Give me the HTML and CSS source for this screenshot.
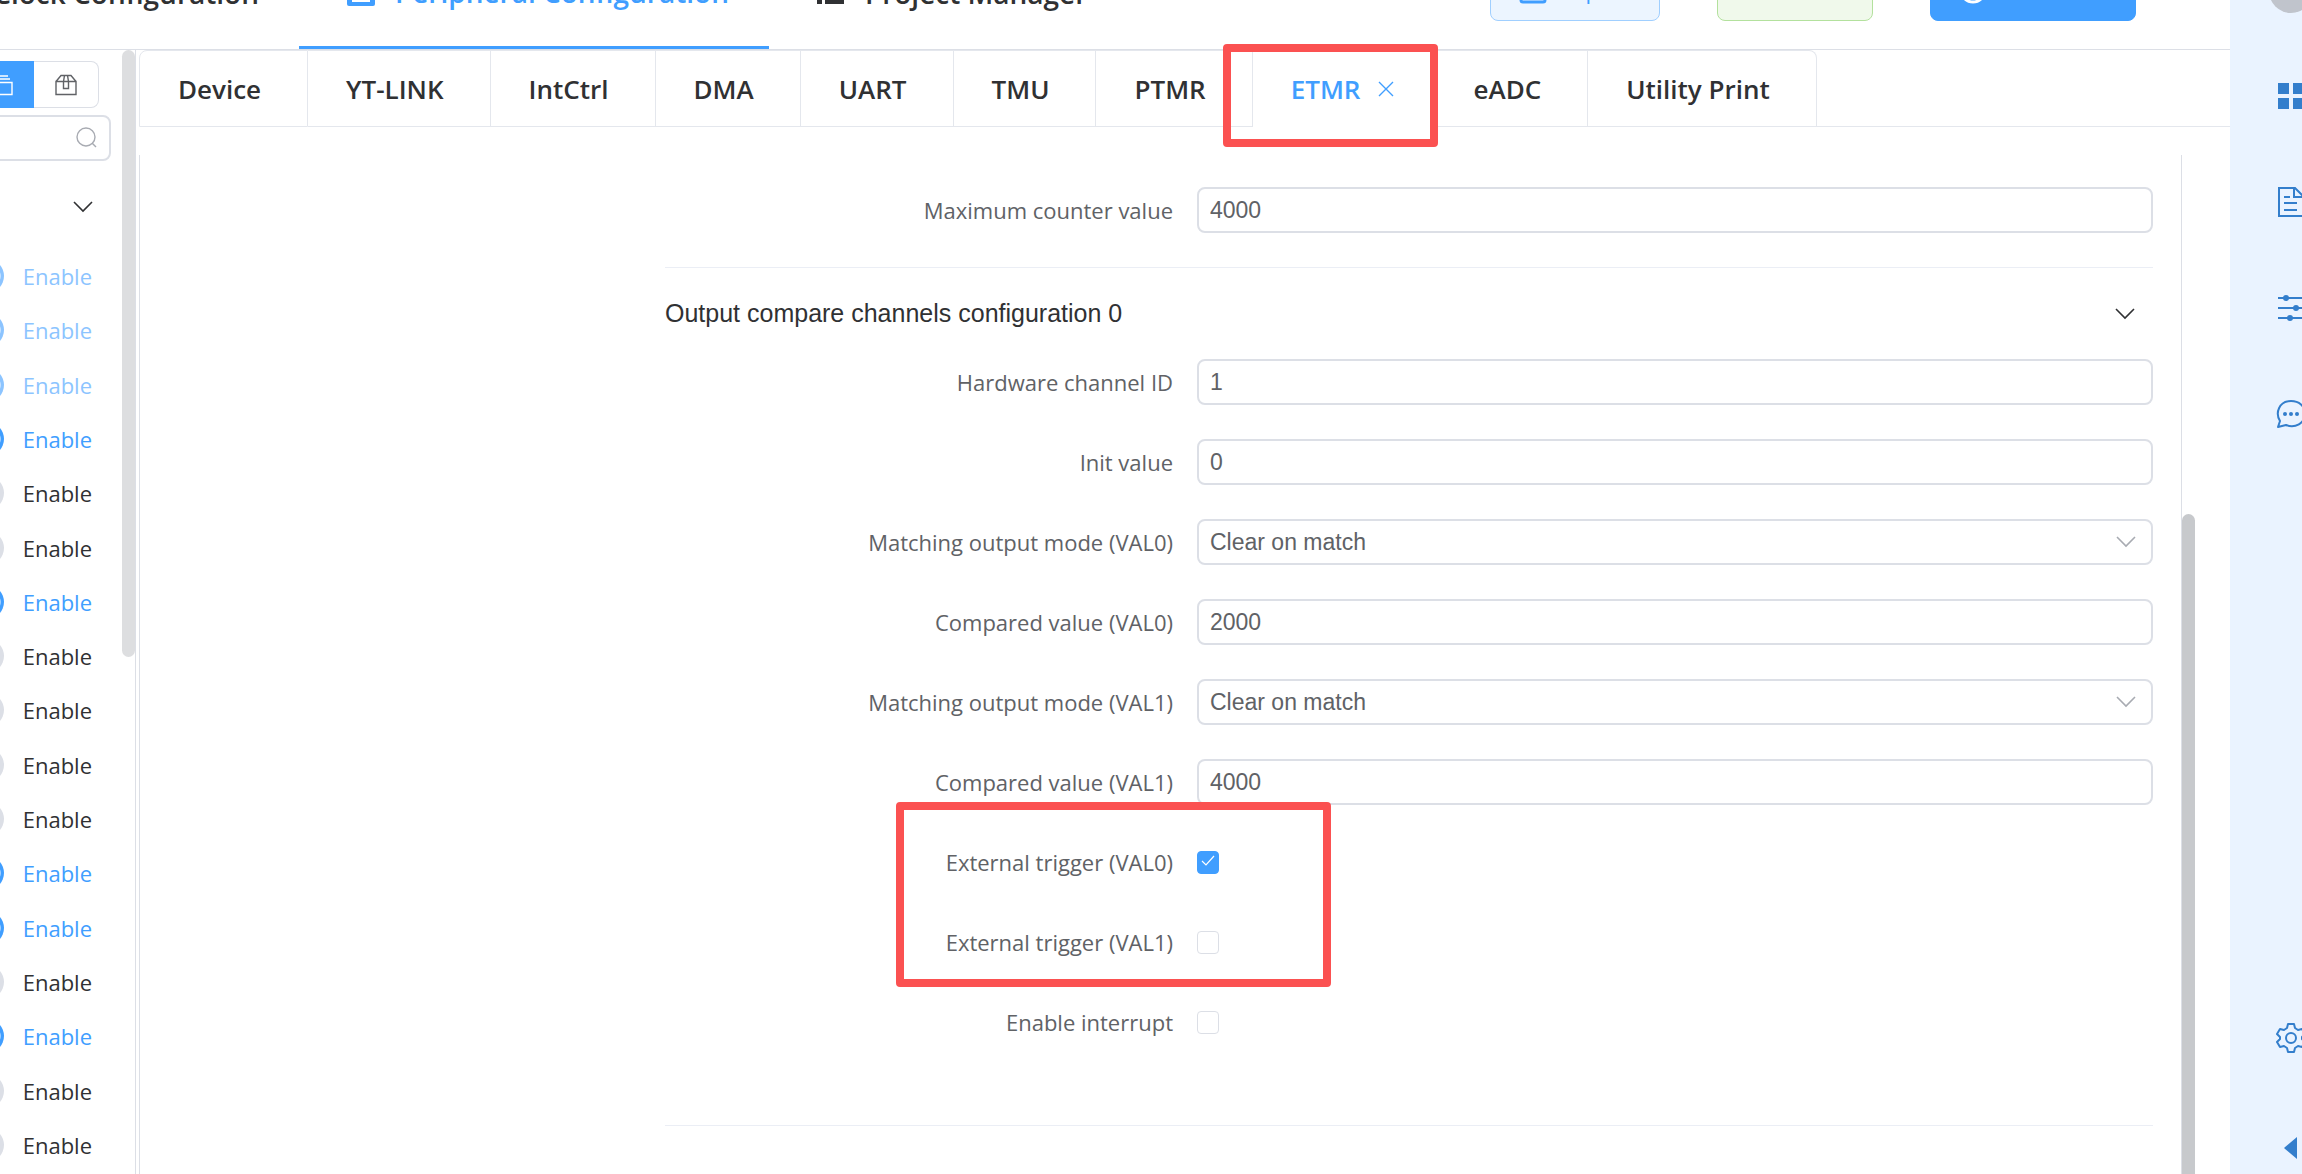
FILE: index.html
```html
<!DOCTYPE html>
<html lang="en">
<head>
    <meta charset="UTF-8">
    <meta name="viewport" content="width=device-width, initial-scale=1.0">
    <title>Peripheral Configuration</title>
    <link rel="stylesheet" href="styles.css">
</head>
<body>
    <div class="app">
        <header class="header">
            <nav class="nav">
                <a class="nav-item nav-first" href="#clock">Clock Configuration</a>
                <a class="nav-item active" href="#peripheral">
                    <svg width="28" height="28" viewBox="0 0 28 28"><rect width="28" height="28" rx="2" fill="currentColor"/><path d="M5 14h18v10H5z" fill="#fff"/></svg>
                    Peripheral Configuration
                </a>
                <a class="nav-item" href="#project">
                    <svg width="28" height="28" viewBox="0 0 28 28" fill="currentColor"><path d="M0 2h5v23H0zM8 2h19v23H8z"/></svg>
                    Project Manager
                </a>
            </nav>
            <div class="actions">
                <button class="btn btn-plain" type="button">
                    <svg width="28" height="28" viewBox="0 0 28 28"><rect x="2" y="2" width="24" height="24" rx="2" fill="none" stroke="currentColor" stroke-width="3"/></svg>
                    Import
                </button>
                <button class="btn btn-success" type="button" disabled>
                    <svg width="28" height="28" viewBox="0 0 28 28"><path d="M7 4h14v19H7z" fill="none" stroke="currentColor" stroke-width="2" stroke-dasharray="4 1"/></svg>
                    Save
                </button>
                <button class="btn btn-primary" type="button">
                    <svg width="28" height="28" viewBox="0 0 28 28"><circle cx="14" cy="14" r="12" fill="none" stroke="currentColor" stroke-width="3"/></svg>
                    Generate
                </button>
            </div>
        </header>

        <aside class="sidebar">
            <div class="view-switch">
                <button class="view-btn selected" type="button" aria-label="Modules">
                    <svg width="24" height="24" viewBox="0 0 24 24" fill="none" stroke="currentColor" stroke-width="1.400"><path d="M5 3h14M3 6h18M1 9.500h22v12H1z"/></svg>
                </button>
                <button class="view-btn" type="button" aria-label="Packages">
                    <svg width="24" height="24" viewBox="0 0 24 24" fill="none" stroke="currentColor" stroke-width="1.400"><path d="M2 8.500h20v13H2zM2 8.500l5-6h10l5 6M9.500 8.500l1-6h3l1 6v7h-5z"/></svg>
                </button>
            </div>
            <div class="search">
                <input class="search-input" type="text" aria-label="Search">
                <svg class="search-icon" width="22" height="22" viewBox="0 0 22 22" fill="none" stroke="currentColor" stroke-width="1.400"><circle cx="10" cy="10" r="9"/><path d="M16 16l4 4"/></svg>
            </div>
            <button class="category" type="button" aria-label="Collapse">
                <svg width="20" height="12" viewBox="0 0 20 12" fill="none" stroke="currentColor" stroke-width="1.600"><path d="M1 1l9 9 9-9"/></svg>
            </button>
            <div class="modules">
                <label class="module on locked"><input class="switch" type="checkbox" checked disabled>Enable</label>
                <label class="module on locked"><input class="switch" type="checkbox" checked disabled>Enable</label>
                <label class="module on locked"><input class="switch" type="checkbox" checked disabled>Enable</label>
                <label class="module on"><input class="switch" type="checkbox" checked>Enable</label>
                <label class="module"><input class="switch" type="checkbox">Enable</label>
                <label class="module"><input class="switch" type="checkbox">Enable</label>
                <label class="module on"><input class="switch" type="checkbox" checked>Enable</label>
                <label class="module"><input class="switch" type="checkbox">Enable</label>
                <label class="module"><input class="switch" type="checkbox">Enable</label>
                <label class="module"><input class="switch" type="checkbox">Enable</label>
                <label class="module"><input class="switch" type="checkbox">Enable</label>
                <label class="module on"><input class="switch" type="checkbox" checked>Enable</label>
                <label class="module on"><input class="switch" type="checkbox" checked>Enable</label>
                <label class="module"><input class="switch" type="checkbox">Enable</label>
                <label class="module on"><input class="switch" type="checkbox" checked>Enable</label>
                <label class="module"><input class="switch" type="checkbox">Enable</label>
                <label class="module"><input class="switch" type="checkbox">Enable</label>
            </div>
            <div class="sidebar-thumb"></div>
        </aside>

        <main class="main">
            <div class="tabs">
                <button class="tab" type="button">Device</button>
                <button class="tab" type="button">YT-LINK</button>
                <button class="tab" type="button">IntCtrl</button>
                <button class="tab" type="button">DMA</button>
                <button class="tab" type="button">UART</button>
                <button class="tab" type="button">TMU</button>
                <button class="tab" type="button">PTMR</button>
                <button class="tab current" type="button">ETMR
                    <svg width="16" height="16" viewBox="0 0 16 16" fill="none" stroke="currentColor" stroke-width="1.400"><path d="M1 1l14 14M15 1L1 15"/></svg>
                    <span class="mark mark-tab"></span>
                </button>
                <button class="tab" type="button">eADC</button>
                <button class="tab" type="button">Utility Print</button>
                <div class="tabs-rest"></div>
            </div>

            <div class="panel">
                <form class="form">
                    <div class="row">
                        <label class="label" for="max">Maximum counter value</label>
                        <input class="field" id="max" type="text" value="4000">
                    </div>
                    <h2 class="section">Output compare channels configuration 0
                        <svg width="20" height="12" viewBox="0 0 20 12" fill="none" stroke="currentColor" stroke-width="1.600"><path d="M1 1l9 9 9-9"/></svg>
                    </h2>
                    <div class="row">
                        <label class="label" for="channel">Hardware channel ID</label>
                        <input class="field" id="channel" type="text" value="1">
                    </div>
                    <div class="row">
                        <label class="label" for="init">Init value</label>
                        <input class="field" id="init" type="text" value="0">
                    </div>
                    <div class="row">
                        <label class="label" for="mode0">Matching output mode (VAL0)</label>
                        <div class="select">
                            <select class="field" id="mode0"><option>Clear on match</option></select>
                            <svg class="select-arrow" width="20" height="12" viewBox="0 0 20 12" fill="none" stroke="currentColor" stroke-width="1.600"><path d="M1 1l9 9 9-9"/></svg>
                        </div>
                    </div>
                    <div class="row">
                        <label class="label" for="value0">Compared value (VAL0)</label>
                        <input class="field" id="value0" type="text" value="2000">
                    </div>
                    <div class="row">
                        <label class="label" for="mode1">Matching output mode (VAL1)</label>
                        <div class="select">
                            <select class="field" id="mode1"><option>Clear on match</option></select>
                            <svg class="select-arrow" width="20" height="12" viewBox="0 0 20 12" fill="none" stroke="currentColor" stroke-width="1.600"><path d="M1 1l9 9 9-9"/></svg>
                        </div>
                    </div>
                    <div class="row">
                        <label class="label" for="value1">Compared value (VAL1)</label>
                        <input class="field" id="value1" type="text" value="4000">
                    </div>
                    <div class="triggers">
                        <div class="row">
                            <label class="label" for="trigger0">External trigger (VAL0)</label>
                            <span class="check">
                                <input class="check-box" id="trigger0" type="checkbox" checked>
                                <svg class="check-mark" width="14" height="12" viewBox="0 0 14 12" fill="none" stroke="currentColor" stroke-width="1.200"><path d="M1 6l4 4 8-9"/></svg>
                            </span>
                        </div>
                        <div class="row">
                            <label class="label" for="trigger1">External trigger (VAL1)</label>
                            <span class="check"><input class="check-box" id="trigger1" type="checkbox"></span>
                        </div>
                        <span class="mark mark-triggers"></span>
                    </div>
                    <div class="row">
                        <label class="label" for="interrupt">Enable interrupt</label>
                        <span class="check"><input class="check-box" id="interrupt" type="checkbox"></span>
                    </div>
                    <hr class="line">
                </form>
                <div class="panel-thumb"></div>
            </div>
        </main>

        <aside class="rail">
            <div class="rail-inner">
                <div class="avatar"></div>
                <a class="rail-link" href="#apps" aria-label="Apps">
                    <svg width="30" height="30" viewBox="0 0 30 30" fill="currentColor"><path d="M2 2h11v11H2zM17 2h11v11H17zM2 17h11v11H2zM17 17h11v11H17z"/></svg>
                </a>
                <a class="rail-link" href="#docs" aria-label="Documents">
                    <svg width="30" height="30" viewBox="0 0 30 30" fill="none" stroke="currentColor" stroke-width="2"><path d="M3 1h16l8 8v20H3zM18 1v9h9M8 10h6M8 16h13M8 23h13"/></svg>
                </a>
                <a class="rail-link" href="#options" aria-label="Options">
                    <svg width="30" height="30" viewBox="0 0 30 30" fill="none" stroke="currentColor" stroke-width="2"><path d="M2 5h26M2 15h26M2 25h26"/><g fill="currentColor" stroke="none"><circle cx="10" cy="5" r="3"/><circle cx="20" cy="15" r="3"/><circle cx="14" cy="25" r="3"/></g></svg>
                </a>
                <a class="rail-link" href="#chat" aria-label="Chat">
                    <svg width="30" height="30" viewBox="0 0 30 30" fill="none" stroke="currentColor" stroke-width="2"><path d="M2 28l2-6C-1 14 3 2 15 2c8 0 14 5 14 13 0 9-10 15-19 11z" stroke-linejoin="round"/><g fill="currentColor" stroke="none"><circle cx="9" cy="15" r="2"/><circle cx="15" cy="15" r="2"/><circle cx="21" cy="15" r="2"/></g></svg>
                </a>
                <a class="rail-link rail-settings" href="#settings" aria-label="Settings">
                    <svg width="30" height="30" viewBox="0 0 30 30" fill="none" stroke="currentColor" stroke-width="2" stroke-linejoin="round"><path d="M12 1h6l1 4 3 2 4-1 3 5-3 3v2l3 3-3 5-4-1-3 2-1 4h-6l-1-4-3-2-4 1-3-5 3-3v-2l-3-3 3-5 4 1 3-2z"/><circle cx="15" cy="15" r="5"/></svg>
                </a>
                <button class="rail-toggle" type="button" aria-label="Collapse">
                    <svg width="30" height="22" viewBox="0 0 30 22" fill="currentColor"><path d="M8 11L21 0v22z"/></svg>
                </button>
            </div>
        </aside>
    </div>
</body>
</html>
```
FILE: styles.css
```css
* {
    box-sizing: border-box;
}
body {
    margin: 0;
    background: #fff;
    color: #303133;
    font-family: "Open Sans", "Noto Sans", sans-serif;
    font-size: 22px;
}
button {
    font-family: inherit;
    cursor: pointer;
}
a {
    color: inherit;
    text-decoration: none;
}
svg {
    display: block;
    flex: none;
}
.app {
    display: grid;
    grid-template-columns: 136px 1fr 72px;
    grid-template-rows: 50px 1fr;
    height: 100vh;
    overflow: hidden;
}

/* header */
.header {
    grid-column: 1 / 3;
    display: flex;
    justify-content: space-between;
    align-items: flex-end;
    overflow: hidden;
    border-bottom: 1px solid #dcdfe6;
}
.nav {
    display: flex;
}
.nav-item {
    display: flex;
    align-items: center;
    gap: 20px;
    height: 112px;
    padding: 0 40px 0 48px;
    font-size: 28px;
    font-weight: 600;
    white-space: nowrap;
}
.nav-first {
    justify-content: flex-end;
    width: 299px;
    padding-left: 0;
}
.nav-item.active {
    color: #409eff;
    border-bottom: 3px solid #409eff;
}
.actions {
    display: flex;
    gap: 57px;
    padding: 0 94px 28px 0;
}
.btn {
    display: flex;
    align-items: center;
    gap: 12px;
    height: 62px;
    padding: 0 28px;
    border: 1px solid #a0cfff;
    border-radius: 8px;
    font-size: 22px;
}
.btn-plain {
    min-width: 170px;
    color: #409eff;
    background: #ecf5ff;
}
.btn-success {
    min-width: 156px;
    color: #b3e19d;
    background: #f0f9eb;
    border-color: #b3e19d;
}
.btn-primary {
    min-width: 206px;
    color: #fff;
    background: #409eff;
    border-color: #409eff;
}

/* left column */
.sidebar {
    position: relative;
    display: flex;
    flex-direction: column;
    align-items: flex-end;
    padding-top: 11px;
    border-right: 1px solid #dcdfe6;
    overflow: hidden;
}
.view-switch {
    display: flex;
    margin: 0 36px 7px 0;
}
.view-btn {
    display: flex;
    align-items: center;
    justify-content: center;
    width: 65px;
    height: 47px;
    border: 1px solid #dcdfe6;
    border-left: 0;
    border-radius: 0 8px 8px 0;
    background: #fff;
    color: #606266;
}
.view-btn.selected {
    border-radius: 0;
    border-color: #409eff;
    background: #409eff;
    color: #fff;
}
.search {
    position: relative;
    width: 300px;
    margin-right: 24px;
}
.search-input {
    display: block;
    width: 100%;
    height: 46px;
    border: 2px solid #dcdfe6;
    border-radius: 8px;
}
.search-icon {
    position: absolute;
    top: 12px;
    right: 13px;
    color: #a8abb2;
}
.category {
    display: flex;
    align-items: center;
    justify-content: flex-end;
    width: 300px;
    height: 88px;
    padding: 4px 42px 0 0;
    border: 0;
    background: none;
    color: #303133;
}
.modules {
    flex: 1;
    display: grid;
    grid-auto-rows: 1fr;
    justify-items: end;
    padding: 0 43px 2px 0;
}
.module {
    display: flex;
    align-items: center;
    gap: 19px;
    font-weight: 500;
}
.module.on {
    color: #409eff;
}
.module.locked {
    opacity: 0.6;
}
.switch {
    appearance: none;
    width: 68px;
    height: 34px;
    margin: 0;
    border-radius: 17px;
    background: #dcdfe6;
}
.switch:checked {
    background: radial-gradient(circle at 51px 17px, #fff 13px, #409eff 14px);
}
.sidebar-thumb {
    position: absolute;
    top: 0;
    right: 0;
    width: 13px;
    height: 54%;
    border-radius: 7px;
    background: #dddee0;
}

/* tabs */
.main {
    display: flex;
    flex-direction: column;
    min-width: 0;
    padding-left: 3px;
}
.tabs {
    display: flex;
    height: 77px;
}
.tab {
    position: relative;
    display: flex;
    align-items: center;
    gap: 18px;
    padding: 0 46px 0 38px;
    border: 1px solid #e4e7ed;
    border-left: 0;
    background: #fff;
    color: #303133;
    font-size: 26px;
    font-weight: 600;
    white-space: nowrap;
}
.tab:first-child {
    border-left: 1px solid #e4e7ed;
    border-top-left-radius: 8px;
}
.tab:nth-last-child(2) {
    border-top-right-radius: 8px;
}
.tab.current {
    padding-right: 40px;
    border-bottom-color: #fff;
    color: #409eff;
}
.tabs-rest {
    flex: 1;
    border-bottom: 1px solid #e4e7ed;
}

/* red highlight frames */
.mark {
    position: absolute;
    border: 8px solid #fb5151;
    border-radius: 4px;
    pointer-events: none;
}
.mark-tab {
    z-index: 2;
    top: -7px;
    right: -4px;
    bottom: -21px;
    left: -30px;
}
.mark-triggers {
    top: -37px;
    bottom: -22px;
    left: 231px;
    width: 435px;
}

/* form */
.panel {
    position: relative;
    flex: 1;
    margin: 28px 48px 0 0;
    padding: 32px 28px 0 525px;
    border: solid #dcdfe6;
    border-width: 0 1px;
}
.row {
    display: grid;
    grid-template-columns: 508px 1fr;
    gap: 24px;
    align-items: center;
    margin-bottom: 34px;
}
.label {
    color: #606266;
    line-height: 30px;
    text-align: right;
}
.field {
    appearance: none;
    display: block;
    width: 100%;
    height: 46px;
    padding: 0 11px;
    border: 2px solid #dcdfe6;
    border-radius: 8px;
    background: #fff;
    color: #606266;
    font-family: "Liberation Sans", Arial, sans-serif;
    font-size: 23px;
}
.section {
    display: flex;
    align-items: center;
    justify-content: space-between;
    height: 92px;
    margin: 0;
    padding-right: 18px;
    border-top: 1px solid #ebeef5;
    font-family: "Liberation Sans", Arial, sans-serif;
    font-size: 25px;
    font-weight: 400;
}
.select {
    position: relative;
}
.select-arrow {
    position: absolute;
    top: 17px;
    right: 17px;
    color: #a8abb2;
    pointer-events: none;
}
.triggers {
    position: relative;
}
.check {
    position: relative;
    display: flex;
    align-items: center;
    height: 46px;
}
.check-box {
    appearance: none;
    width: 22px;
    height: 23px;
    margin: 0;
    border: 1px solid #dcdfe6;
    border-radius: 4px;
    background: #fff;
}
.check-box:checked {
    border-color: #409eff;
    background: #409eff;
}
.check-mark {
    position: absolute;
    top: 16px;
    left: 4px;
    color: #fff;
    pointer-events: none;
}
.line {
    margin: 80px 0 0;
    border: 0;
    border-top: 1px solid #ebeef5;
}
.panel-thumb {
    position: absolute;
    top: 359px;
    right: -14px;
    bottom: 0;
    width: 13px;
    border-radius: 7px 7px 0 0;
    background: #c7c9cc;
}

/* right rail */
.rail {
    grid-column: 3;
    grid-row: 1 / 3;
    overflow: hidden;
    background: #eaf3ff;
    color: #337ecc;
}
.rail-inner {
    display: flex;
    flex-direction: column;
    align-items: center;
    gap: 76px;
    width: 122px;
    height: 100%;
    padding-bottom: 15px;
}
.avatar {
    flex: none;
    width: 44px;
    height: 44px;
    margin: -31px 0 -8px;
    border-radius: 50%;
    background: #c0c4cc;
}
.rail-settings {
    margin-top: auto;
}
.rail-toggle {
    padding: 8px 0 0;
    border: 0;
    background: none;
    color: inherit;
}
```
